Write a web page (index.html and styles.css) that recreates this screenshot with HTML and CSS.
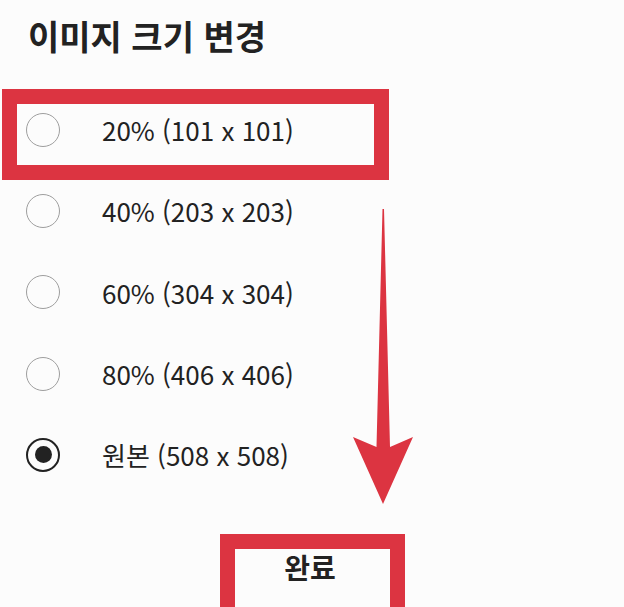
FILE: index.html
```html
<!DOCTYPE html>
<html lang="ko">
  <head>
    <meta charset="UTF-8" />
    <meta name="viewport" content="width=device-width, initial-scale=1.0" />
    <title>이미지 크기 변경</title>
    <link rel="stylesheet" href="styles.css">
  </head>
  <body>
    <section class="dialog">
      <h1 class="dialog-title">이미지 크기 변경</h1>

      <ul class="size-list">
        <li class="size-option">
          <span class="radio"></span>
          <span class="size-label">20% (101 x 101)</span>
        </li>
        <li class="size-option">
          <span class="radio"></span>
          <span class="size-label">40% (203 x 203)</span>
        </li>
        <li class="size-option">
          <span class="radio"></span>
          <span class="size-label">60% (304 x 304)</span>
        </li>
        <li class="size-option">
          <span class="radio"></span>
          <span class="size-label">80% (406 x 406)</span>
        </li>
        <li class="size-option">
          <span class="radio checked"></span>
          <span class="size-label">원본 (508 x 508)</span>
        </li>
      </ul>

      <div class="actions">
        <button class="done-btn">완료</button>
      </div>
    </section>

    <!-- 안내용 표시 -->
    <div class="mark mark-option"></div>
    <div class="mark mark-done"></div>
    <svg class="guide-arrow" width="624" height="607" viewBox="0 0 624 607">
      <polygon points="382.5,209 384,209 390,447 413,437 383,504 353,437 376.5,447" fill="#dc3441" />
    </svg>
  </body>
</html>
```

FILE: styles.css
```css
* {
  margin: 0;
  padding: 0;
  box-sizing: border-box;
}

body {
  font-family: "Noto Sans CJK KR", "Noto Sans", sans-serif;
  background-color: #fcfcfc;
  color: #222;
  width: 624px;
  height: 607px;
  overflow: hidden;
  position: relative;
}

.dialog {
  padding: 11px 0 0 28px;
}

.dialog-title {
  font-size: 34px;
  font-weight: 700;
  line-height: 50px;
}

.size-list {
  list-style: none;
  margin-top: 28px;
}

.size-option {
  display: flex;
  align-items: center;
  height: 81.3px;
}

.radio {
  width: 34px;
  height: 34px;
  border: 1.5px solid #9e9e9e;
  border-radius: 50%;
  margin-left: -2px;
  display: flex;
  align-items: center;
  justify-content: center;
}

.radio.checked {
  border: 2.5px solid #222;
}

.radio.checked::after {
  content: "";
  width: 17px;
  height: 17px;
  border-radius: 50%;
  background-color: #222;
}

.size-label {
  margin-left: 42px;
  font-size: 26px;
}

.actions {
  display: flex;
  justify-content: center;
  margin-top: 50px;
}

.done-btn {
  background: none;
  border: none;
  font-family: inherit;
  font-size: 28px;
  font-weight: 700;
  color: #222;
  width: 155px;
  height: 43px;
  margin-left: -32px;
}

.mark {
  position: absolute;
  border: 15px solid #dc3441;
}

.mark-option {
  left: 2px;
  top: 89px;
  width: 387px;
  height: 91px;
}

.mark-done {
  left: 220px;
  top: 534px;
  width: 185px;
  height: 90px;
}

.guide-arrow {
  position: absolute;
  left: 0;
  top: 0;
}
```
